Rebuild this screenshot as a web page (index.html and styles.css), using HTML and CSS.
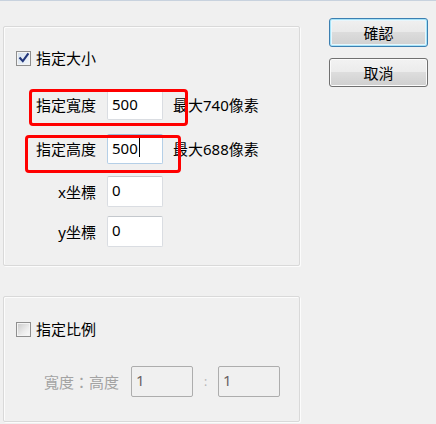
FILE: index.html
```html
<!DOCTYPE html>
<html lang="zh-Hant">
<head>
<meta charset="utf-8">
<title>指定大小</title>
<link rel="stylesheet" href="styles.css">
</head>
<body>
<div class="dialog">
  <div class="left">
    <div class="group group-size">
      <div class="check-row">
        <span class="checkbox checked">
          <svg width="12" height="12" viewBox="0 0 12 12"><path d="M2.2 6.3 L4.8 9.2 L9.8 2.3" fill="none" stroke="#22367a" stroke-width="2.1" stroke-linecap="square"/></svg>
        </span>
        <span class="check-label">指定大小</span>
      </div>
      <div class="rows">
        <div class="row r1">
          <span class="label">指定寬度</span>
          <div class="field">500</div>
          <span class="note">最大740像素</span>
        </div>
        <div class="row r2">
          <span class="label">指定高度</span>
          <div class="field focused">500<span class="caret"></span></div>
          <span class="note">最大688像素</span>
        </div>
        <div class="row r3">
          <span class="label">x坐標</span>
          <div class="field">0</div>
        </div>
        <div class="row r4">
          <span class="label">y坐標</span>
          <div class="field">0</div>
        </div>
      </div>
    </div>
    <div class="group group-ratio">
      <div class="check-row">
        <span class="checkbox"></span>
        <span class="check-label">指定比例</span>
      </div>
      <div class="ratio-row">
        <span class="ratio-label">寬度：高度</span>
        <div class="field disabled">1</div>
        <span class="colon">:</span>
        <div class="field disabled">1</div>
      </div>
    </div>
  </div>
  <div class="right">
    <button class="btn default">確認</button>
    <button class="btn">取消</button>
  </div>
</div>
<div class="mark mark1"></div>
<div class="mark mark2"></div>
</body>
</html>
```

FILE: styles.css
```css
html, body {
  margin: 0;
  padding: 0;
}
body {
  width: 436px;
  height: 424px;
  background: #f0f0f0;
  font-family: "Noto Sans", "Noto Sans CJK TC", sans-serif;
  font-size: 15px;
  color: #000;
  position: relative;
  overflow: hidden;
  border-top: 1px solid #c8d2de;
  box-sizing: border-box;
}
.dialog {
  display: flex;
  align-items: flex-start;
}
.left {
  display: flex;
  flex-direction: column;
  padding-left: 3px;
  padding-top: 25px;
}
.group {
  width: 297px;
  box-sizing: border-box;
  border: 1px solid #d9d9d9;
  border-radius: 2px;
  box-shadow: inset 1px 1px 0 #fcfcfc, 1px 1px 0 #fcfcfc;
}
.group-size {
  height: 240px;
  padding-top: 23px;
}
.group-ratio {
  height: 126px;
  margin-top: 30px;
  padding-top: 24px;
}
.check-row {
  display: flex;
  align-items: center;
  height: 16px;
  padding-left: 12px;
}
.checkbox {
  width: 15px;
  height: 15px;
  box-sizing: border-box;
  border: 1px solid #8f8f8f;
  background: linear-gradient(135deg, #c9c9c9, #ececec 60%, #fbfbfb);
  box-shadow: inset 0 0 0 1px #f4f4f4;
  display: flex;
  align-items: center;
  justify-content: center;
}
.checkbox.checked {
  background: linear-gradient(135deg, #d3e0ee, #f3f7fb);
}
.checkbox svg {
  display: block;
}
.check-label {
  margin-left: 5px;
  line-height: 16px;
}
.rows {
  display: flex;
  flex-direction: column;
}
.row {
  display: flex;
  align-items: center;
  height: 30px;
}
.r1 { margin-top: 24px; }
.r2 { margin-top: 14px; }
.r3 { margin-top: 12px; height: 31px; }
.r4 { margin-top: 9px; height: 31px; }
.label {
  width: 92px;
  text-align: right;
  line-height: 20px;
}
.field {
  width: 56px;
  height: 100%;
  box-sizing: border-box;
  margin-left: 11px;
  background: #fff;
  border: 1px solid #dadde2;
  border-top-color: #c4c8cd;
  border-radius: 2px;
  padding: 3px 0 0 4px;
  line-height: 20px;
  position: relative;
}
.field.focused {
  border-color: #b5cfe7;
  border-top-color: #9ebcd9;
}
.caret {
  display: inline-block;
  width: 1px;
  height: 19px;
  background: #000;
  vertical-align: top;
  margin-left: 1px;
}
.note {
  margin-left: 10px;
  line-height: 20px;
}
.ratio-row {
  display: flex;
  align-items: center;
  height: 31px;
  margin-top: 29px;
  padding-left: 40px;
}
.ratio-label {
  color: #a3a3a3;
  line-height: 20px;
}
.field.disabled {
  width: 62px;
  background: #f0f0f0;
  border: 1px solid #adadad;
  color: #6b6262;
  margin-left: 12px;
}
.colon {
  width: 25px;
  text-align: center;
  color: #b5b5b5;
  font-size: 12px;
}
.colon + .field.disabled {
  margin-left: 0;
}
.right {
  display: flex;
  flex-direction: column;
  gap: 11px;
  margin-left: 29px;
  padding-top: 17px;
}
.btn {
  width: 99px;
  height: 29px;
  box-sizing: border-box;
  border: 1px solid #707070;
  border-radius: 3px;
  background: linear-gradient(#f2f2f2 0%, #ebebeb 50%, #dddddd 50%, #cfcfcf 100%);
  box-shadow: inset 0 0 0 1px #fbfbfb;
  font-family: "Noto Sans CJK TC", sans-serif;
  font-size: 15px;
  color: #000;
  padding: 0;
  line-height: 20px;
}
.btn.default {
  border-color: #3c7fb1;
  box-shadow: inset 0 0 0 1px #a6e3f8, inset 0 0 0 2px #e8f6fc;
  background: linear-gradient(#f0f0f0 0%, #e9e9e9 50%, #dcdcdc 50%, #d0d0d0 100%);
}
.mark {
  position: absolute;
  border: 3px solid #ff0000;
  border-radius: 4px;
  box-sizing: border-box;
  pointer-events: none;
}
.mark1 {
  left: 29px;
  top: 88px;
  width: 159px;
  height: 37px;
}
.mark2 {
  left: 25px;
  top: 134px;
  width: 156px;
  height: 38px;
}
```
